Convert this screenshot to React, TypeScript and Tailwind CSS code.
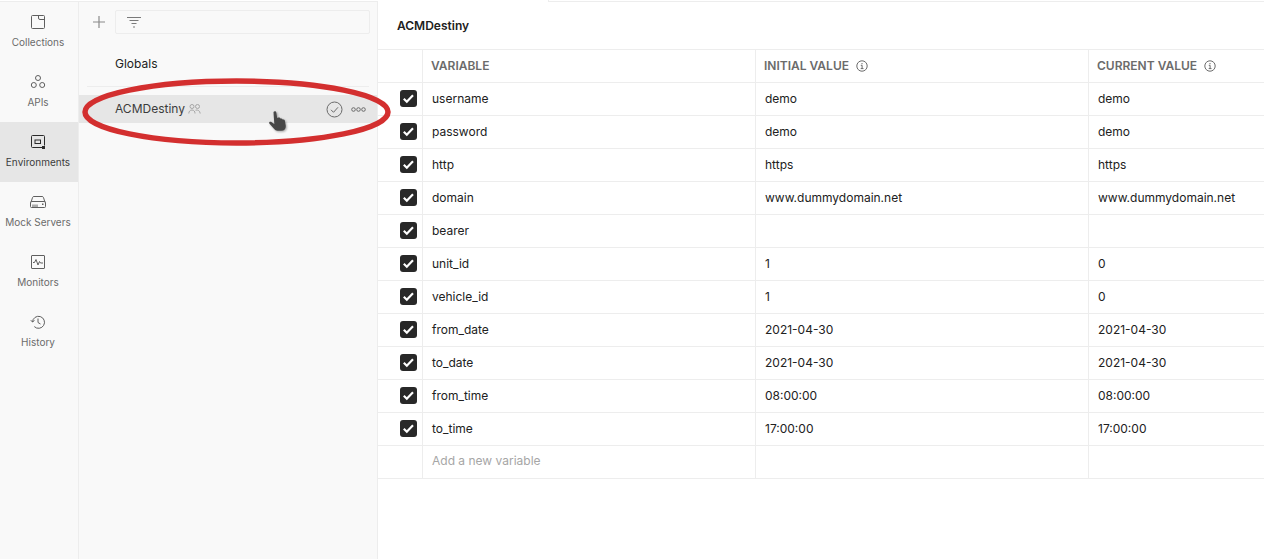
import type { ReactNode } from "react";

const rows = [
  ["username", "demo", "demo"],
  ["password", "demo", "demo"],
  ["http", "https", "https"],
  ["domain", "www.dummydomain.net", "www.dummydomain.net"],
  ["bearer", "", ""],
  ["unit_id", "1", "0"],
  ["vehicle_id", "1", "0"],
  ["from_date", "2021-04-30", "2021-04-30"],
  ["to_date", "2021-04-30", "2021-04-30"],
  ["from_time", "08:00:00", "08:00:00"],
  ["to_time", "17:00:00", "17:00:00"],
];

function Icon({ children }: { children: ReactNode }) {
  return (
    <svg width="16" height="16" viewBox="0 0 16 16" fill="none" stroke="#5f5f5f" strokeWidth="1">
      {children}
    </svg>
  );
}

const navItems: { label: string; icon: ReactNode; active?: boolean }[] = [
  {
    label: "Collections",
    icon: (
      <Icon>
        <path d="M2.5 1.5h11a1 1 0 0 1 1 1v11a1 1 0 0 1-1 1h-11a1 1 0 0 1-1-1v-11a1 1 0 0 1 1-1z" />
        <path d="M8.5 1.5v2.5a1.5 1.5 0 0 0 1.5 1.5h4.500" />
      </Icon>
    ),
  },
  {
    label: "APIs",
    icon: (
      <Icon>
        <circle cx="8" cy="4" r="2.5" />
        <circle cx="3.800" cy="11" r="2.5" />
        <circle cx="12.200" cy="11" r="2.5" />
      </Icon>
    ),
  },
  {
    label: "Environments",
    active: true,
    icon: (
      <svg width="16" height="16" viewBox="0 0 16 16" fill="none" stroke="#2b2b2b" strokeWidth="1">
        <path d="M12.500 13.500h-10a1 1 0 0 1-1-1v-10a1 1 0 0 1 1-1h11a1 1 0 0 1 1 1v9" />
        <rect x="5" y="6" width="5.500" height="3.500" />
        <rect x="12" y="12" width="3" height="3" fill="#2b2b2b" stroke="none" />
      </svg>
    ),
  },
  {
    label: "Mock Servers",
    icon: (
      <Icon>
        <path d="M1 8.500l1.500-5a1.500 1.500 0 0 1 1.400-1h8.200a1.500 1.500 0 0 1 1.400 1l1.500 5" />
        <rect x="0.500" y="7.500" width="15" height="6" rx="1" />
        <path d="M3 13v-2.500M5 13v-2.500M7 13v-2.500" />
        <rect x="12" y="9.500" width="1.500" height="1.500" fill="#5f5f5f" stroke="none" />
      </Icon>
    ),
  },
  {
    label: "Monitors",
    icon: (
      <Icon>
        <rect x="1.500" y="1.500" width="13" height="13" rx="0.500" />
        <path d="M3 8.500h1.500l1.500-3 2 5.500 1.500-3.500 1 1.500H13" />
      </Icon>
    ),
  },
  {
    label: "History",
    icon: (
      <Icon>
        <path d="M2.500 8a6 6 0 1 1 1.800 4.600" />
        <path d="M0.800 6.200L2.500 8l2-1.600" />
        <path d="M8 4.500V8.500l2.500 1.500" />
      </Icon>
    ),
  },
];

function Check() {
  return (
    <div className="flex h-[17px] w-[17px] items-center justify-center rounded-[3px] bg-[#282828]">
      <svg width="13" height="13" viewBox="0 0 13 13" fill="none" stroke="#ffffff" strokeWidth="2.200">
        <path d="M1.800 6.800l3 2.900 6.200-6.500" />
      </svg>
    </div>
  );
}

function InfoIcon() {
  return (
    <svg width="12" height="12" viewBox="0 0 12 12" fill="none" stroke="#6b6b6b" strokeWidth="1">
      <circle cx="6" cy="6" r="5.200" />
      <path d="M4.800 5.300H6.100V8.600M4.700 8.600h2.800M6 3v1.200" />
    </svg>
  );
}

export default function App() {
  return (
    <div className="relative flex h-[559px] w-[1264px] overflow-hidden bg-white font-['Inter',sans-serif] text-[12px] text-[#212121]">
      {/* Left nav */}
      <aside className="mt-px flex w-[79px] shrink-0 flex-col border-t border-r border-[#ededed] bg-[#f9f9f9]">
        {navItems.map((item) => (
          <div
            key={item.label}
            className={`flex h-[60px] flex-col items-center pt-[12px] pr-[2px] ${item.active ? "bg-[#e6e6e6]" : ""}`}
          >
            {item.icon}
            <span
              className={`mt-[5px] whitespace-nowrap text-[10px] leading-[14px] ${item.active ? "text-[#3c3c3c]" : "text-[#6b6b6b]"}`}
            >
              {item.label}
            </span>
          </div>
        ))}
      </aside>

      {/* Environment list */}
      <section className="mt-px flex w-[299px] shrink-0 flex-col border-t border-r border-[#ededed] bg-[#f9f9f9]">
        <div className="flex h-[32px] items-center pt-[8px]">
          <svg className="ml-[13px]" width="14" height="14" viewBox="0 0 14 14" fill="none" stroke="#8a8a8a" strokeWidth="1.200">
            <path d="M7 1v12M1 7h12" />
          </svg>
          <div className="ml-[9px] flex h-[24px] w-[255px] items-center rounded-[2px] border border-[#ededed] pl-[10px]">
            <svg width="16" height="13" viewBox="0 0 16 13" fill="none" stroke="#7a7a7a" strokeWidth="1">
              <path d="M1 1.500h14M3.500 4.500h9M5.500 7.500h5M7 11h2" />
            </svg>
          </div>
        </div>
        <div className="mx-[8px] mt-[7px] flex h-[46px] items-center border-b border-[#ededed] pl-[28px] pt-[1px] text-[12px] text-[#212121]">
          Globals
        </div>
        <div className="mt-[8px] flex h-[28px] items-center bg-[#e6e6e6] pl-[36px] pr-[11px]">
          <span className="text-[12px] text-[#3c3c3c]">ACMDestiny</span>
          <svg className="ml-[3px]" width="13" height="12" viewBox="0 0 13 12" fill="none" stroke="#a6a6a6" strokeWidth="1">
            <circle cx="4" cy="3.500" r="2" />
            <circle cx="9.500" cy="3.500" r="2" />
            <path d="M0.800 10.500c0-2 1.200-3.500 3.200-3.500s3 1.500 3 3.500M7.500 7.200c2.500-.8 4.500.8 4.700 3.300" />
          </svg>
          <svg className="ml-auto" width="17" height="17" viewBox="0 0 17 17" fill="none" stroke="#6b6b6b" strokeWidth="1">
            <circle cx="8.500" cy="8.500" r="7.500" />
            <path d="M5 8.800l2.500 2.500 4.500-5" />
          </svg>
          <svg className="ml-[8px]" width="15" height="5" viewBox="0 0 15 5" fill="none" stroke="#6b6b6b" strokeWidth="1">
            <circle cx="2.500" cy="2.500" r="1.800" />
            <circle cx="7.500" cy="2.500" r="1.800" />
            <circle cx="12.500" cy="2.500" r="1.800" />
          </svg>
        </div>
      </section>

      {/* Variable table */}
      <main className="flex min-w-0 flex-1 flex-col">
        <div className="flex h-[50px] items-center border-b border-[#ededed] pl-[19px] pt-[2px] text-[12px] font-semibold text-[#212121]">
          ACMDestiny
        </div>
        <div className="grid grid-cols-[45px_333px_333px_1fr]">
          <div className="h-[33px] border-r border-b border-[#ededed]" />
          <div className="flex h-[33px] items-center border-r border-b border-[#ededed] pl-[8px] text-[12px] font-semibold text-[#6b6b6b]">
            VARIABLE
          </div>
          <div className="flex h-[33px] items-center gap-[7px] border-r border-b border-[#ededed] pl-[8px] text-[12px] font-semibold text-[#6b6b6b]">
            INITIAL VALUE
            <InfoIcon />
          </div>
          <div className="flex h-[33px] items-center gap-[7px] border-b border-[#ededed] pl-[8px] text-[12px] font-semibold text-[#6b6b6b]">
            CURRENT VALUE
            <InfoIcon />
          </div>
          {rows.map(([name, initial, current]) => (
            <div key={name} className="contents">
              <div className="flex h-[33px] items-center justify-end border-r border-b border-[#ededed] pr-[5px] pb-[1px]">
                <Check />
              </div>
              <div className="flex h-[33px] items-center border-r border-b border-[#ededed] pl-[9px]">{name}</div>
              <div className="flex h-[33px] items-center border-r border-b border-[#ededed] pl-[9px]">{initial}</div>
              <div className="flex h-[33px] items-center border-b border-[#ededed] pl-[9px]">{current}</div>
            </div>
          ))}
          <div className="h-[33px] border-r border-b border-[#ededed]" />
          <div className="flex h-[33px] items-center border-r border-b border-[#ededed] pb-[2px] pl-[9px] text-[#a6a6a6]">
            Add a new variable
          </div>
          <div className="h-[33px] border-r border-b border-[#ededed]" />
          <div className="h-[33px] border-b border-[#ededed]" />
        </div>
      </main>

      {/* Tab strip line along the top edge */}
      <div className="absolute left-[548px] right-0 top-0 h-[2px] border-b border-l border-[#ededed]" />

      {/* Hand-drawn annotation over the selected row */}
      <svg className="pointer-events-none absolute left-[78px] top-[74px]" width="320" height="76" viewBox="0 0 320 76" fill="none">
        <ellipse cx="158.500" cy="38" rx="151.500" ry="31" stroke="#d32f2f" strokeWidth="5.500" />
      </svg>

      {/* Hand cursor */}
      <svg className="absolute left-[268px] top-[110px] drop-shadow-[1px_1px_1px_rgba(0,0,0,0.35)]" width="21" height="23" viewBox="0 0 21 23">
        <path
          d="M5.500 2C6.300 .8 8 1 8.300 2.500l.9 5.500 1.200-.4c1-.3 1.800.2 2 1 1-.4 1.900 0 2.200.9 1-.3 2.100.2 2.300 1.300l.9 5.200c0 2.800-1.500 4.800-4.500 4.800H9.500c-1.500 0-2.500-.8-3.500-2L1.300 13.500c-.7-1.100.5-2.300 1.700-1.700L6.300 14Z"
          fill="#474747"
        />
      </svg>
    </div>
  );
}
